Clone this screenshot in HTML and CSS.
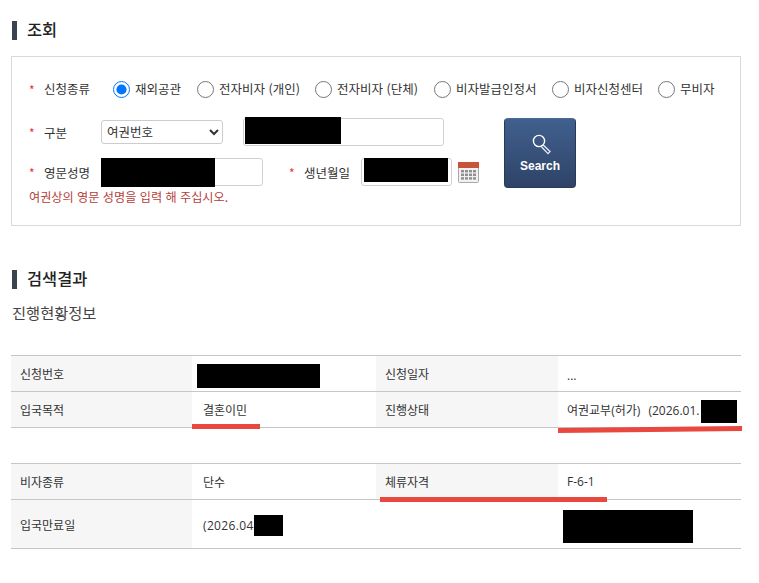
FILE: index.html
```html
<!DOCTYPE html>
<html lang="ko">
<head>
<meta charset="utf-8">
<title>조회</title>
<link rel="stylesheet" href="styles.css">
</head>
<body>
<main class="page">
  <h2 class="section-title first">조회</h2>
  <form class="search-box">
    <div class="row radio-row">
      <span class="star">*</span>
      <span class="label">신청종류</span>
      <div class="radios">
        <label class="radio r1"><input type="radio" name="t" checked>재외공관</label>
        <label class="radio r2"><input type="radio" name="t">전자비자 (개인)</label>
        <label class="radio r3"><input type="radio" name="t">전자비자 (단체)</label>
        <label class="radio r4"><input type="radio" name="t">비자발급인정서</label>
        <label class="radio r5"><input type="radio" name="t">비자신청센터</label>
        <label class="radio r6"><input type="radio" name="t">무비자</label>
      </div>
    </div>
    <div class="lower">
      <div class="fields">
        <div class="row row-kind">
          <span class="star">*</span>
          <span class="label">구분</span>
          <select class="select"><option>여권번호</option></select>
          <div class="field field-passport"><input class="input" type="text"><span class="mask mask-passport"></span></div>
        </div>
        <div class="row row-name">
          <span class="star">*</span>
          <span class="label">영문성명</span>
          <div class="field field-name"><input class="input" type="text"><span class="mask mask-name"></span></div>
          <span class="star star-birth">*</span>
          <span class="label label-birth">생년월일</span>
          <div class="field field-birth"><input class="input" type="text"><span class="mask mask-birth"></span></div>
          <svg class="cal" width="21" height="21" viewBox="0 0 21 21" aria-hidden="true">
            <rect x="0.5" y="0.5" width="20" height="20" rx="1" fill="#f1f1f1" stroke="#a8a8a8"/>
            <rect x="0" y="0" width="21" height="6" fill="#c9523a"/>
            <g fill="#8f8f8f">
              <rect x="3" y="8" width="3" height="2.4"/><rect x="7" y="8" width="3" height="2.4"/><rect x="11" y="8" width="3" height="2.4"/><rect x="15" y="8" width="3" height="2.4"/>
              <rect x="3" y="11.6" width="3" height="2.4"/><rect x="7" y="11.6" width="3" height="2.4"/><rect x="11" y="11.6" width="3" height="2.4"/><rect x="15" y="11.6" width="3" height="2.4"/>
              <rect x="3" y="15.2" width="3" height="2.4"/><rect x="7" y="15.2" width="3" height="2.4"/><rect x="11" y="15.2" width="3" height="2.4"/><rect x="15" y="15.2" width="3" height="2.4"/>
            </g>
          </svg>
        </div>
        <p class="error">여권상의 영문 성명을 입력 해 주십시오.</p>
      </div>
      <button class="search-btn" type="button">
        <svg width="24" height="24" viewBox="0 0 24 24" aria-hidden="true">
          <circle cx="9" cy="9" r="5.6" fill="none" stroke="#fff" stroke-width="1.4"/>
          <path d="M13.2 13 L20 19.6 L18 21.6 L11.6 15" fill="none" stroke="#e8edf4" stroke-width="1.3"/>
        </svg>
        <span>Search</span>
      </button>
    </div>
  </form>

  <h2 class="section-title second">검색결과</h2>
  <h3 class="sub-title">진행현황정보</h3>

  <table class="info info-a">
    <colgroup><col class="c1"><col class="c2"><col class="c3"><col class="c4"></colgroup>
    <tr>
      <th>신청번호</th>
      <td class="cell"><span class="mask mask-appno"></span></td>
      <th>신청일자</th>
      <td class="right dots">...</td>
    </tr>
    <tr>
      <th>입국목적</th>
      <td class="cell">결혼이민<span class="mark mark-purpose"></span></td>
      <th>진행상태</th>
      <td class="right cell status">여권교부(허가) (2026.01.<span class="mask mask-status"></span>
        <svg class="mark-slant" width="184" height="7" viewBox="0 0 184 7" aria-hidden="true"><polygon points="0,2 184,0 184,5 0,7" fill="#e9483f"/></svg>
      </td>
    </tr>
  </table>

  <table class="info info-b">
    <colgroup><col class="c1"><col class="c2"><col class="c3"><col class="c4"></colgroup>
    <tr>
      <th>비자종류</th>
      <td>단수</td>
      <th class="cell">체류자격<span class="mark mark-status"></span></th>
      <td class="right">F-6-1</td>
    </tr>
    <tr class="tall">
      <th>입국만료일</th>
      <td class="cell date">(2026.04<span class="mask mask-expiry"></span></td>
      <td class="plain"></td>
      <td class="right cell"><span class="mask mask-extra"></span></td>
    </tr>
  </table>
</main>
</body>
</html>
```
FILE: styles.css
```css
* { box-sizing: border-box; }
html, body { margin: 0; padding: 0; background: #fff; }
body {
  font-family: "Noto Sans CJK KR", "Noto Sans", sans-serif;
  font-size: 12.5px;
  color: #333;
  height: 583px;
  overflow: hidden;
}
.page { padding: 0 18px 0 11px; }

.section-title {
  margin: 0 0 0 1px;
  height: 19px;
  border-left: 5px solid #3b4350;
  padding-left: 10px;
  font-size: 16.4px;
  font-weight: 500;
  line-height: 17px;
  color: #222;
}
.section-title.first { margin-top: 21px; }
.section-title.second { margin-top: 44px; }

.search-box {
  margin-top: 16px;
  height: 170px;
  border: 1px solid #d9d9d9;
  padding: 20px 0 0 17px;
}
.row { display: flex; align-items: center; }
.star { width: 15px; color: #e8343a; font-size: 12px; flex: none; }
.label { width: 57px; flex: none; }

.radio-row { height: 24px; }
.radio-row .label { padding-bottom: 2px; }
.radios { display: flex; margin-left: 12px; }
.radio { display: flex; align-items: center; white-space: nowrap; padding-bottom: 2px; }
.radio input { width: 17px; height: 17px; margin: 2px 5px 0 0; accent-color: #0075ff; }
.r1 { width: 84px; }
.r2 { width: 118px; }
.r3 { width: 119px; }
.r4 { width: 118px; }
.r5 { width: 106px; }

.lower { display: flex; margin-top: 17px; }
.fields { width: 450px; }
.row-kind { height: 28px; }
.row-name { height: 28px; margin-top: 12px; }

.select {
  width: 122px;
  height: 24px;
  margin-right: 20px;
  padding: 0 0 2px 1px;
  font: inherit;
  color: #333;
  background: #fff;
  border: 1px solid #ccc;
  border-radius: 3px;
}
.field { position: relative; height: 28px; flex: none; }
.field-passport { width: 201px; }
.field-name { width: 162px; }
.field-birth { width: 91px; }
.input {
  display: block;
  width: 100%;
  height: 100%;
  border: 1px solid #d0d0d0;
  border-radius: 3px;
  background: #fff;
}
.star-birth { margin-left: 26px; }
.cal { margin: 1px 0 0 6px; flex: none; }

.mask { position: absolute; background: #000; }
.mask-passport { left: 2px; top: -1px; width: 96px; height: 27px; }
.mask-name { left: 0; top: 0; width: 114px; height: 29px; }
.mask-birth { left: 3px; top: 0; width: 84px; height: 24px; }
.mask-appno { left: 5px; top: 8px; width: 123px; height: 24px; }
.mask-status { left: 143px; top: 8px; width: 36px; height: 23px; }
.mask-expiry { left: 62px; top: 15px; width: 29px; height: 21px; }
.mask-extra { left: 5px; top: 10px; width: 130px; height: 33px; }

.error { margin: 3px 0 0; font-size: 12.15px; line-height: 16px; color: #b5403c; }

.search-btn {
  width: 72px;
  height: 70px;
  margin-left: 25px;
  padding: 0;
  display: flex;
  flex-direction: column;
  align-items: center;
  border: 1px solid #2a3a55;
  border-top-color: #4a6a9c;
  border-radius: 4px;
  background: linear-gradient(#41608e, #2e4367);
  color: #fff;
  font-family: "Liberation Sans", Arial, sans-serif;
  font-size: 12px;
  font-weight: 700;
}
.search-btn svg { margin-top: 13px; margin-left: 3px; }
.search-btn span { margin-top: 3px; line-height: 14px; }

.sub-title {
  margin: 13px 0 0 1px;
  font-size: 15.3px;
  font-weight: 400;
  line-height: 20px;
  color: #444;
}

.info {
  width: 730px;
  table-layout: fixed;
  border-collapse: collapse;
  border-top: 1px solid #c6c6c6;
  font-family: "Open Sans", "Noto Sans CJK KR", sans-serif;
  font-size: 12px;
}
.info-a { margin-top: 33px; }
.info-b { margin-top: 35px; }
.c1 { width: 181px; }
.c2 { width: 184px; }
.c3 { width: 182px; }
.c4 { width: 183px; }
.info tr { height: 36px; border-bottom: 1px solid #c6c6c6; }
.info tr.tall { height: 49px; }
.info tr.tall th, .info tr.tall td { padding-top: 2px; }
.info th {
  background: #f6f6f6;
  text-align: left;
  font-weight: 400;
  padding: 0 0 0 9px;
  color: #333;
}
.info td { padding: 0 0 0 11px; color: #333; }
.info td.right { padding-left: 9px; }
.info td.plain { background: #fff; }
.info td.dots { padding-top: 3px; }
.info td.status { word-spacing: 5px; }
.info td.date { letter-spacing: 0.35px; }
.cell { position: relative; }
.mark { position: absolute; background: #e9483f; height: 5px; }
.mark-purpose { left: 0; bottom: -2px; width: 68px; }
.mark-status { left: 4px; bottom: -3px; width: 227px; z-index: 1; }
.mark-slant { position: absolute; left: 0; bottom: -6px; display: block; }
```
